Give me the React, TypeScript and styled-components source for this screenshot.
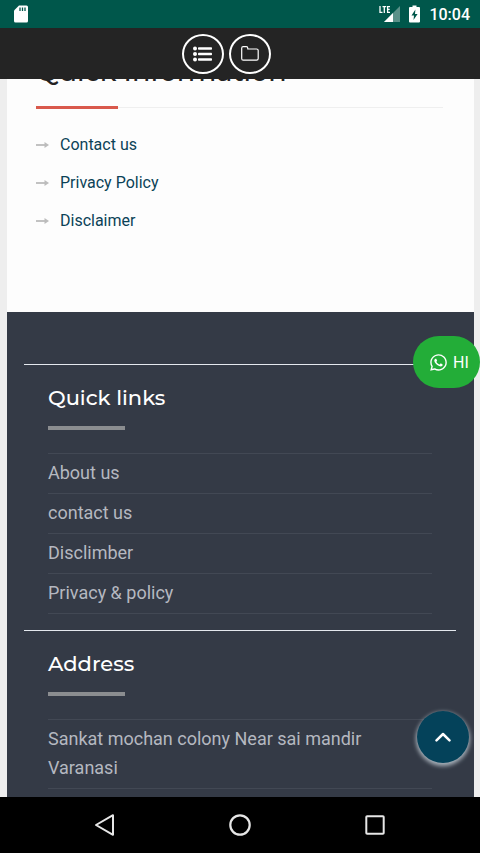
import React from "react";
import styled, { createGlobalStyle } from "styled-components";
import { FaWhatsapp } from "react-icons/fa";

const GlobalStyle = createGlobalStyle`
  *, *::before, *::after { box-sizing: border-box; }
  body { margin: 0; background: #000; font-family: Roboto, "Liberation Sans", sans-serif; }
  button { border: 0; padding: 0; margin: 0; background: none; font: inherit; color: inherit; cursor: pointer; }
  ul { list-style: none; margin: 0; padding: 0; }
  h2, h3, p { margin: 0; }
  a { color: inherit; text-decoration: none; }
  svg { display: block; flex: none; }
`;

const Screen = styled.div`
  position: relative;
  display: flex;
  flex-direction: column;
  height: 100vh;
`;

const StatusBar = styled.header`
  flex: none;
  display: flex;
  align-items: center;
  height: 28px;
  padding: 0 10px 0 14px;
  background: #00574b;
  color: #fff;
`;

const StatusIcons = styled.div`
  display: flex;
  align-items: center;
  gap: 9px;
  margin-left: auto;
`;

const Clock = styled.time`
  font-size: 16px;
  line-height: 28px;
  font-weight: 500;
  padding-top: 2px;
`;

const AppBar = styled.nav`
  flex: none;
  display: flex;
  justify-content: center;
  align-items: center;
  gap: 5px;
  height: 51px;
  padding-right: 28px;
  background: #242424;
`;

const RoundButton = styled.button`
  display: grid;
  place-items: center;
  width: 42px;
  height: 40px;
  border: 2px solid #fff;
  border-radius: 50%;
  color: #fff;
`;

const Viewport = styled.main`
  flex: 1;
  min-height: 0;
  overflow: hidden;
  padding: 0 6px 0 7px;
  background: #eeeeee;
`;

const InfoPanel = styled.section`
  display: flow-root;
  padding: 0 31px 79px 29px;
  background: #fdfdfd;
`;

const InfoTitle = styled.h2`
  margin-top: -26px;
  padding-bottom: 16px;
  border-bottom: 1px solid #efefef;
  color: #222;
  font-family: Montserrat, Inter, sans-serif;
  font-size: 27px;
  line-height: 38px;
  font-weight: 500;
  white-space: nowrap;
`;

const Accent = styled.div`
  width: 82px;
  height: 3px;
  margin-top: -2px;
  background: #d9594c;
`;

const InfoList = styled.ul`
  display: flex;
  flex-direction: column;
  gap: 14px;
  padding-top: 24px;
`;

const InfoLink = styled.a`
  display: flex;
  align-items: center;
  gap: 11px;
  color: #0b4257;
  font-size: 16px;
  line-height: 24px;
`;

const Footer = styled.footer`
  min-height: 600px;
  padding: 52px 18px 0 17px;
  background: #343a46;
`;

const FooterSection = styled.section`
  padding: 17px 24px 16px;
  border-top: 1px solid #e4e8ee;
`;

const FooterTitle = styled.h3`
  color: #fff;
  font-family: Montserrat, Inter, sans-serif;
  font-size: 21px;
  line-height: 32px;
  font-weight: 500;
`;

const TitleBar = styled.div`
  width: 77px;
  height: 4px;
  margin: 12px 0 23px;
  background: #8b8d90;
`;

const FooterList = styled.ul`
  border-top: 1px solid #424854;
`;

const FooterItem = styled.li`
  padding: 4px 0 6px;
  border-bottom: 1px solid #424854;
  color: #b5b8c0;
  font-size: 18px;
  line-height: 29px;
`;

const ChatButton = styled.button`
  position: absolute;
  top: 336px;
  right: 0;
  display: flex;
  align-items: center;
  gap: 5px;
  height: 52px;
  width: 67px;
  padding-left: 16px;
  border-radius: 26px;
  background: #23ad38;
  color: #fff;
  font-size: 16px;
`;

const TopButton = styled.button`
  position: absolute;
  right: 11px;
  bottom: 90px;
  display: grid;
  place-items: center;
  width: 52px;
  height: 52px;
  border-radius: 50%;
  background: #04425a;
  box-shadow: 0 2px 4px 1px #aab4bd;
`;

const SystemNav = styled.nav`
  flex: none;
  display: flex;
  justify-content: center;
  gap: 87px;
  height: 56px;
  background: #000;
`;

const NavButton = styled.button`
  display: grid;
  place-items: center;
  width: 48px;
  height: 56px;
`;

const Arrow = () => (
  <svg width="13" height="8" viewBox="0 0 13 8" aria-hidden="true">
    <path d="M0 4H10" stroke="#bcbcbc" strokeWidth="1.8" />
    <path d="M8.5 1 13 4 8.5 7Z" fill="#bcbcbc" />
  </svg>
);

const infoLinks = ["Contact us", "Privacy Policy", "Disclaimer"];
const quickLinks = ["About us", "contact us", "Disclimber", "Privacy & policy"];

export default function App() {
  return (
    <Screen>
      <GlobalStyle />
      <StatusBar>
        <svg width="14" height="18" viewBox="0 0 14 18" aria-hidden="true">
          <path d="M5 .5H12.5Q14 .5 14 2V16Q14 17.5 12.5 17.5H1.5Q0 17.5 0 16V5.5Z" fill="#fff" />
          <path d="M6 2.5V6M8.5 2.5V6M11 2.5V6" stroke="#00574b" strokeWidth="1.3" />
        </svg>
        <StatusIcons>
          <svg width="21" height="18" viewBox="0 0 21 18" role="img" aria-label="LTE signal">
            <path d="M21 1V17H5Z" fill="#5b9189" />
            <path d="M14 8V17H5Z" fill="#fff" />
            <path d="M1 1V7.3H3.5M3.5 1.6H7.2M5.3 1.6V8M11 1.6H8.6V7.3H11M8.6 4.4H10.7" fill="none" stroke="#fff" strokeWidth="1.3" />
          </svg>
          <svg width="11" height="18" viewBox="0 0 11 18" role="img" aria-label="Battery charging">
            <path d="M3.5 .5H7.5V2H10Q11 2 11 3V16.5Q11 17.5 10 17.5H1Q0 17.5 0 16.5V3Q0 2 1 2H3.5Z" fill="#fff" />
            <path d="M6.4 4.5 2.5 10.6H5L4.5 15 8.6 8.9H6Z" fill="#00574b" />
          </svg>
          <Clock>10:04</Clock>
        </StatusIcons>
      </StatusBar>

      <AppBar>
        <RoundButton aria-label="Menu">
          <svg width="19" height="16" viewBox="0 0 19 16" fill="#fff">
            <circle cx="2" cy="2.5" r="2" />
            <circle cx="2" cy="8" r="2" />
            <circle cx="2" cy="13.5" r="2" />
            <rect x="5" y="1.2" width="14" height="2.6" rx="0.8" />
            <rect x="5" y="6.7" width="14" height="2.6" rx="0.8" />
            <rect x="5" y="12.2" width="14" height="2.6" rx="0.8" />
          </svg>
        </RoundButton>
        <RoundButton aria-label="Folder">
          <svg width="18" height="15" viewBox="0 0 18 15">
            <path
              d="M.7 2.2Q.7.7 2.2.7H5.3Q6.8.7 6.8 2.2V3H15.6Q17.2 3 17.2 4.6V12.6Q17.2 14.2 15.6 14.2H2.3Q.7 14.2.7 12.6Z"
              fill="none"
              stroke="#fff"
              strokeWidth="1.2"
            />
          </svg>
        </RoundButton>
      </AppBar>

      <Viewport>
        <InfoPanel>
          <InfoTitle>Quick Information</InfoTitle>
          <Accent />
          <InfoList>
            {infoLinks.map((label) => (
              <li key={label}>
                <InfoLink href="#">
                  <Arrow />
                  {label}
                </InfoLink>
              </li>
            ))}
          </InfoList>
        </InfoPanel>
        <Footer>
          <FooterSection>
            <FooterTitle>Quick links</FooterTitle>
            <TitleBar />
            <FooterList>
              {quickLinks.map((label) => (
                <FooterItem key={label}>
                  <a href="#">{label}</a>
                </FooterItem>
              ))}
            </FooterList>
          </FooterSection>
          <FooterSection>
            <FooterTitle>Address</FooterTitle>
            <TitleBar />
            <FooterList>
              <FooterItem>Sankat mochan colony Near sai mandir Varanasi</FooterItem>
            </FooterList>
          </FooterSection>
        </Footer>
      </Viewport>

      <ChatButton>
        <FaWhatsapp size={19} aria-hidden="true" />
        HI
      </ChatButton>
      <TopButton aria-label="Back to top">
        <svg width="16" height="10" viewBox="0 0 16 10">
          <path d="M1.5 8.3 8 2 14.5 8.3" fill="none" stroke="#fff" strokeWidth="2.5" strokeLinecap="round" strokeLinejoin="round" />
        </svg>
      </TopButton>

      <SystemNav>
        <NavButton aria-label="Back">
          <svg width="24" height="24" viewBox="0 0 24 24">
            <path d="M3 12 20 2.2V21.8Z" fill="none" stroke="#e6e6e6" strokeWidth="2" strokeLinejoin="round" />
          </svg>
        </NavButton>
        <NavButton aria-label="Home">
          <svg width="24" height="24" viewBox="0 0 24 24">
            <circle cx="12" cy="12" r="9.7" fill="none" stroke="#e6e6e6" strokeWidth="2.2" />
          </svg>
        </NavButton>
        <NavButton aria-label="Recent apps">
          <svg width="24" height="24" viewBox="0 0 24 24">
            <rect x="3.3" y="3.3" width="17.4" height="17.4" rx="0.8" fill="none" stroke="#e6e6e6" strokeWidth="2" />
          </svg>
        </NavButton>
      </SystemNav>
    </Screen>
  );
}
